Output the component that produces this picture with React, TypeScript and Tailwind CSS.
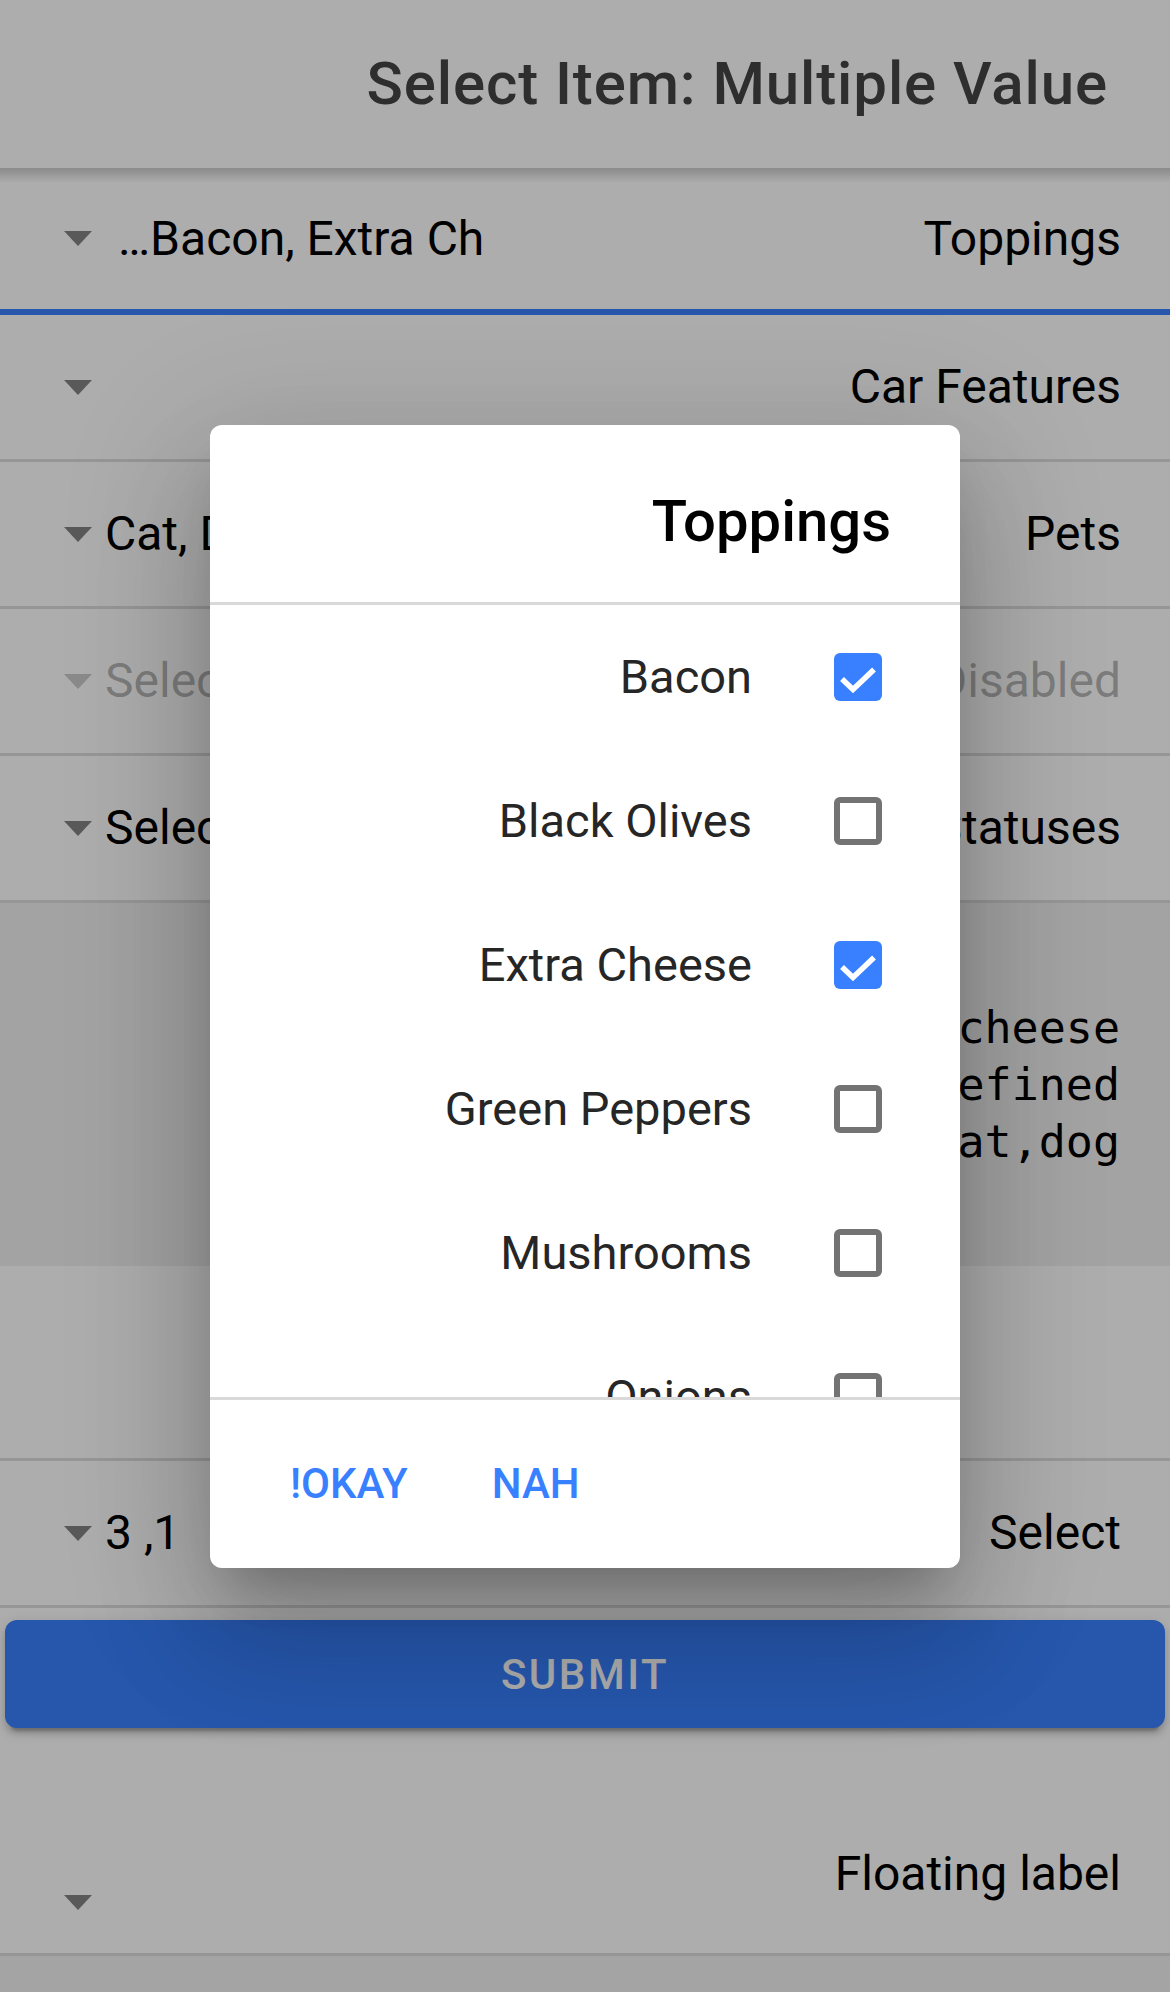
import React from "react";

function Tri({ light }: { light?: boolean }) {
  return (
    <svg width="28" height="15" viewBox="0 0 28 15" className="shrink-0">
      <polygon points="0,0 28,0 14,15" fill={light ? "#cccccc" : "#848484"} />
    </svg>
  );
}

function Row({
  value,
  label,
  disabled,
}: {
  value?: string;
  label: string;
  disabled?: boolean;
}) {
  return (
    <div className="flex h-[147px] items-center border-b-[3px] border-[#dedede] pl-[64px] pr-[49px]">
      <Tri light={disabled} />
      <span
        className={
          disabled
            ? "ml-[13px] flex-1 truncate text-[48px] leading-[56px] text-black/30"
            : "ml-[13px] flex-1 truncate text-[48px] leading-[56px] text-black"
        }
      >
        {value}
      </span>
      <span
        className={
          disabled
            ? "text-[48px] leading-[56px] text-black/30"
            : "text-[48px] leading-[56px] text-black"
        }
      >
        {label}
      </span>
    </div>
  );
}

function CheckBox({ checked }: { checked?: boolean }) {
  if (checked) {
    return (
      <div className="flex h-[48px] w-[48px] shrink-0 items-center justify-center rounded-[6px] bg-[#3880ff]">
        <svg width="48" height="48" viewBox="0 0 48 48">
          <polyline
            points="8,26 19,36.5 40,16.5"
            fill="none"
            stroke="#ffffff"
            strokeWidth="5.5"
          />
        </svg>
      </div>
    );
  }
  return (
    <div className="h-[48px] w-[48px] shrink-0 rounded-[6px] border-[6px] border-[#737373] bg-white" />
  );
}

const items: { label: string; checked?: boolean }[] = [
  { label: "Bacon", checked: true },
  { label: "Black Olives" },
  { label: "Extra Cheese", checked: true },
  { label: "Green Peppers" },
  { label: "Mushrooms" },
  { label: "Onions" },
  { label: "Pepperoni" },
];

export default function App() {
  return (
    <div className="relative h-[1992px] w-[1170px] overflow-hidden bg-white font-['Roboto',sans-serif]">
      {/* header */}
      <div className="flex h-[168px] items-center justify-end bg-white pr-[62px]">
        <span className="text-[60px] font-medium leading-[72px] tracking-[0.015em] text-[#454545]">
          Select Item: Multiple Value
        </span>
      </div>
      <div className="relative z-10 -mb-[15px] h-[15px] bg-linear-to-b from-black/20 to-transparent" />

      {/* row 1 (active) */}
      <div className="flex h-[147px] items-center border-b-[6px] border-[#3880ff] pl-[64px] pr-[49px]">
        <Tri />
        <span className="ml-[26px] flex-1 truncate text-[48px] leading-[56px] text-black">
          …Bacon, Extra Ch
        </span>
        <span className="text-[48px] leading-[56px] text-black">Toppings</span>
      </div>
      <Row label="Car Features" />
      <Row value="Cat, Dog" label="Pets" />
      <Row value="Select One" label="Disabled" disabled />
      <Row value="Select One" label="Statuses" />

      {/* output block */}
      <div className="h-[363px] bg-[#f0f0f0] py-[96px] pr-[50px] text-right font-['DejaVu_Sans_Mono',monospace] text-[45px] leading-[57px] text-black">
        <div className="whitespace-pre">toppings: bacon,extracheese</div>
        <div className="whitespace-pre">carFeatures: undefined</div>
        <div className="whitespace-pre">pets: cat,dog</div>
      </div>

      <div className="h-[195px] border-b-[3px] border-[#dedede]" />

      <Row value="3 ,1" label="Select" />

      <div className="mx-[5px] mt-[12px] flex h-[108px] items-center justify-center rounded-[12px] bg-[#3880ff] shadow-[0_9px_3px_-6px_rgba(0,0,0,0.2),0_6px_6px_0_rgba(0,0,0,0.14),0_3px_15px_0_rgba(0,0,0,0.12)]">
        <span className="text-[42px] font-medium uppercase tracking-[0.06em] text-white">
          Submit
        </span>
      </div>

      {/* floating label row */}
      <div className="flex h-[228px] border-b-[3px] border-[#dedede] pl-[64px] pr-[49px]">
        <div className="mb-[43px] self-end">
          <Tri />
        </div>
        <div className="flex-1" />
        <span className="mb-[51px] self-end text-[48px] leading-[56px] text-black">
          Floating label
        </span>
      </div>
      <div className="h-[36px] bg-[#f2f2f2]" />

      {/* backdrop */}
      <div className="absolute inset-0 z-20 bg-black/[0.32]" />

      {/* alert dialog */}
      <div className="absolute left-[210px] top-[425px] z-30 flex h-[1143px] w-[750px] flex-col overflow-hidden rounded-[12px] bg-white shadow-[0_33px_45px_-21px_rgba(0,0,0,0.2),0_72px_114px_9px_rgba(0,0,0,0.14),0_27px_138px_24px_rgba(0,0,0,0.12)]">
        <div className="flex justify-end pb-[45px] pr-[69px] pt-[60px]">
          <span className="text-[58px] font-medium leading-[72px] text-black">Toppings</span>
        </div>
        <div className="h-[3px] bg-[#d9d9d9]" />
        <div className="h-[792px] overflow-hidden">
          {items.map((it) => (
            <div
              key={it.label}
              className="flex h-[144px] items-center justify-end pr-[78px]"
            >
              <span className="text-[47px] leading-[56px] text-[#262626]">{it.label}</span>
              <div className="ml-[82px]">
                <CheckBox checked={it.checked} />
              </div>
            </div>
          ))}
        </div>
        <div className="h-[3px] bg-[#d9d9d9]" />
        <div className="flex flex-1 items-center pl-[80px]">
          <span className="text-[42px] font-medium uppercase leading-[48px] text-[#3880ff]">
            !Okay
          </span>
          <span className="ml-[84px] text-[42px] font-medium uppercase leading-[48px] text-[#3880ff]">
            Nah
          </span>
        </div>
      </div>
    </div>
  );
}
